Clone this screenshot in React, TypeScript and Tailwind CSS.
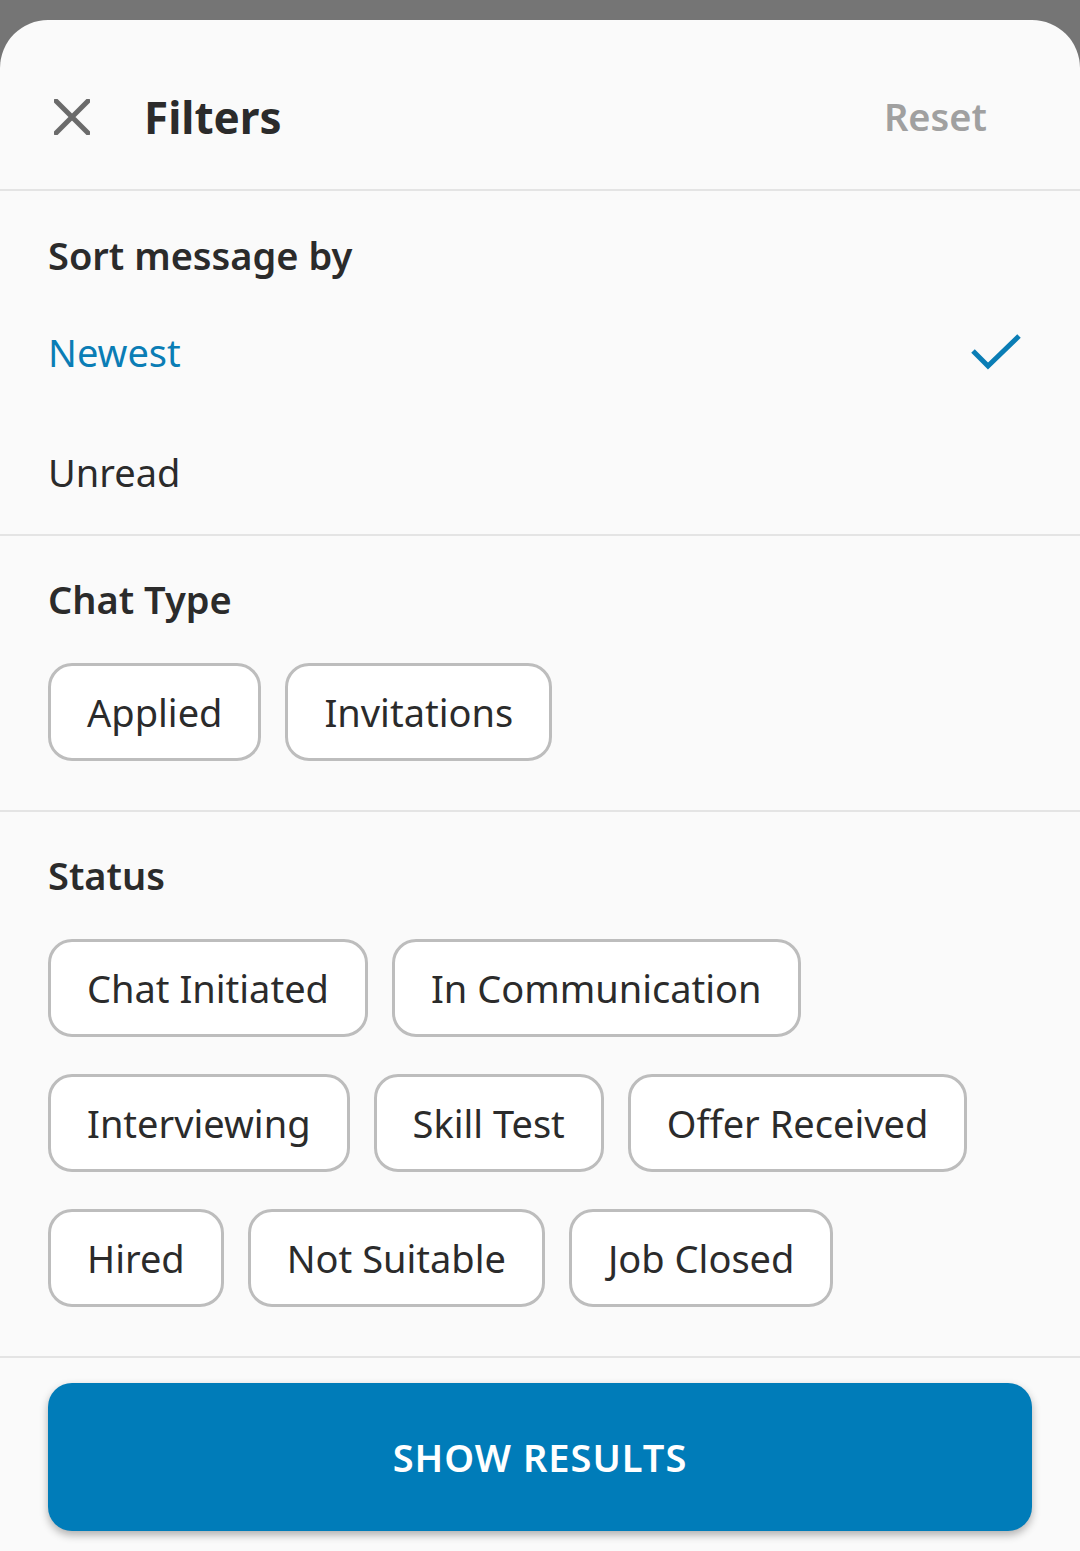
import React from "react";

const chatTypes = ["Applied", "Invitations"];
const statusRows = [
  ["Chat Initiated", "In Communication"],
  ["Interviewing", "Skill Test", "Offer Received"],
  ["Hired", "Not Suitable", "Job Closed"],
];

function Chip({ label }: { label: string }) {
  return (
    <div className="flex h-[98px] items-center rounded-[24px] border-[3px] border-[#bdbdbd] bg-white px-[36px] text-[38px] text-[#2b2b2b]">
      {label}
    </div>
  );
}

export default function App() {
  return (
    <div
      className="min-h-[1551px] bg-[#757575] pt-[20px]"
      style={{ fontFamily: '"Noto Sans", "Open Sans", sans-serif' }}
    >
      <div className="flex min-h-[1531px] flex-col rounded-t-[48px] bg-[#fafafa]">
        <header className="flex h-[171px] items-center border-b-2 border-[#e4e4e4] pl-[54px] pr-[93px] pt-[24px]">
          <svg width="36" height="36" viewBox="0 0 36 36" className="shrink-0">
            <path d="M2 2 L34 34 M34 2 L2 34" stroke="#6b6b6b" strokeWidth="5" strokeLinecap="square" />
          </svg>
          <h1 className="ml-[54px] text-[44px] font-bold text-[#2b2b2b]">Filters</h1>
          <button className="ml-auto text-[38px] font-semibold text-[#a0a0a0]">Reset</button>
        </header>

        <section className="border-b-2 border-[#e4e4e4] px-[48px] pt-[36px] pb-[2px]">
          <h2 className="text-[38px] font-semibold text-[#2b2b2b]">Sort message by</h2>
          <div className="mt-[8px] flex h-[120px] items-center justify-between">
            <span className="text-[38px] text-[#0a7db5]">Newest</span>
            <svg width="52" height="38" viewBox="0 0 52 38" className="mr-[10px]">
              <path d="M3 18 L18 33 L49 3" fill="none" stroke="#0a7db5" strokeWidth="5" />
            </svg>
          </div>
          <div className="flex h-[120px] items-center">
            <span className="text-[38px] text-[#2b2b2b]">Unread</span>
          </div>
        </section>

        <section className="border-b-2 border-[#e4e4e4] px-[48px] pt-[35px] pb-[49px]">
          <h2 className="text-[38px] font-semibold text-[#2b2b2b]">Chat Type</h2>
          <div className="mt-[35px] flex gap-[24px]">
            {chatTypes.map((c) => (
              <Chip key={c} label={c} />
            ))}
          </div>
        </section>

        <section className="border-b-2 border-[#e4e4e4] px-[48px] pt-[35px] pb-[49px]">
          <h2 className="text-[38px] font-semibold text-[#2b2b2b]">Status</h2>
          <div className="mt-[35px] flex flex-col gap-[37px]">
            {statusRows.map((row, i) => (
              <div key={i} className="flex gap-[24px]">
                {row.map((s) => (
                  <Chip key={s} label={s} />
                ))}
              </div>
            ))}
          </div>
        </section>

        <div className="px-[48px] pt-[25px] pb-[19px]">
          <button className="flex h-[148px] w-full items-center justify-center rounded-[24px] bg-[#007cb9] text-[38px] font-semibold tracking-[1px] text-white shadow-[0_4px_8px_rgba(0,0,0,0.3)]">
            SHOW RESULTS
          </button>
        </div>
      </div>
    </div>
  );
}
